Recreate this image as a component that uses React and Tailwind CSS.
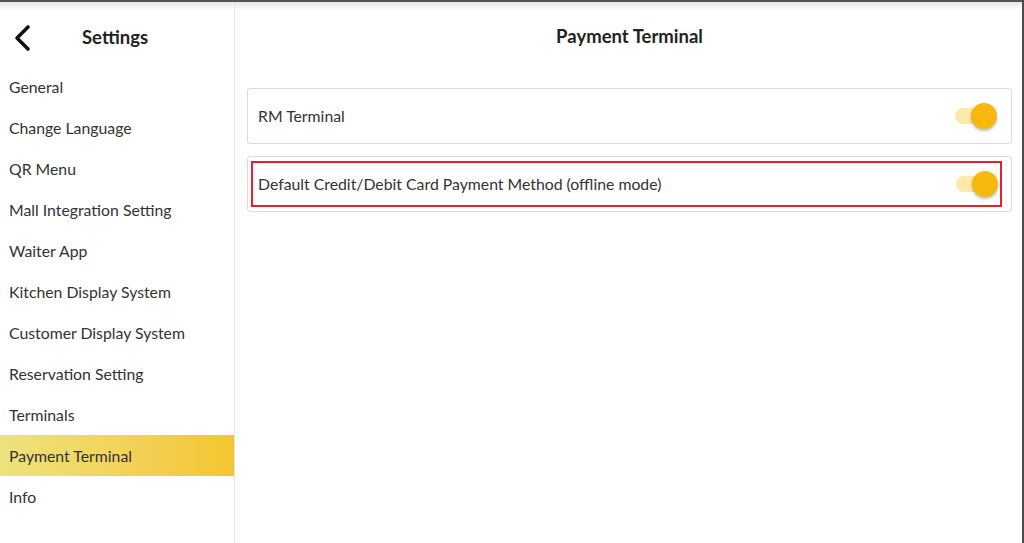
import React from "react";

const items = [
  "General",
  "Change Language",
  "QR Menu",
  "Mall Integration Setting",
  "Waiter App",
  "Kitchen Display System",
  "Customer Display System",
  "Reservation Setting",
  "Terminals",
  "Payment Terminal",
  "Info",
];

function Toggle() {
  return (
    <div className="relative w-[42px] h-[28px] flex items-center">
      <div className="w-[36px] h-[16px] rounded-full bg-[#fde9a9]" />
      <div className="absolute right-0 top-[1px] w-[26px] h-[26px] rounded-full bg-[#f6b70e] shadow-[0_2px_3px_rgba(0,0,0,0.25)]" />
    </div>
  );
}

export default function App() {
  return (
    <div
      className="w-[1024px] h-[543px] bg-white flex flex-col overflow-hidden border-r-2 border-[#4a4a4a]"
      style={{ fontFamily: "Lato, 'Open Sans', sans-serif" }}
    >
      <div className="h-[2px] bg-[#555] shrink-0" />
      <div className="h-[8px] bg-gradient-to-b from-[#e6e6e6] to-white shrink-0" />
      <div className="flex flex-1 -mt-[8px]">
        <aside className="w-[235px] shrink-0 border-r border-[#e4e4e4] flex flex-col">
          <div className="h-[64px] flex items-center pt-[7px]">
            <svg width="40" height="30" viewBox="0 0 40 30" className="ml-[2px]">
              <path d="M26 4 L15 15 L26 26" fill="none" stroke="#111" strokeWidth="3.6" strokeLinecap="round" strokeLinejoin="round" />
            </svg>
            <span className="ml-[40px] text-[18.5px] font-bold text-[#222]">Settings</span>
          </div>
          <div className="flex flex-col">
            {items.map((it) => (
              <div
                key={it}
                className={
                  "h-[41px] flex items-center pl-[9px] text-[15.8px] text-[#333] " +
                  (it === "Payment Terminal" ? "bg-gradient-to-r from-[#ede27c] to-[#f4c52e]" : "")
                }
              >
                {it}
              </div>
            ))}
          </div>
        </aside>
        <main className="flex-1 flex flex-col pl-[12px] pr-[10px]">
          <div className="h-[70px] mb-[16px] flex items-center justify-center">
            <span className="text-[18.5px] font-bold text-[#222]">Payment Terminal</span>
          </div>
          <div className="flex flex-col gap-[12px]">
            <div className="h-[56px] border border-[#dcdcdc] rounded-[3px] flex items-center justify-between pl-[10px] pr-[14px]">
              <span className="text-[15.8px] text-[#333]">RM Terminal</span>
              <Toggle />
            </div>
            <div className="h-[56px] border border-[#dcdcdc] rounded-[3px] flex items-center pl-[3px]">
              <div className="flex-1 h-[46px] border-2 border-[#e8202b] flex items-center justify-between pl-[5px] pr-[2px]">
                <span className="text-[15.8px] text-[#333]">Default Credit/Debit Card Payment Method (offline mode)</span>
                <Toggle />
              </div>
              <div className="w-[9px]" />
            </div>
          </div>
        </main>
      </div>
    </div>
  );
}
